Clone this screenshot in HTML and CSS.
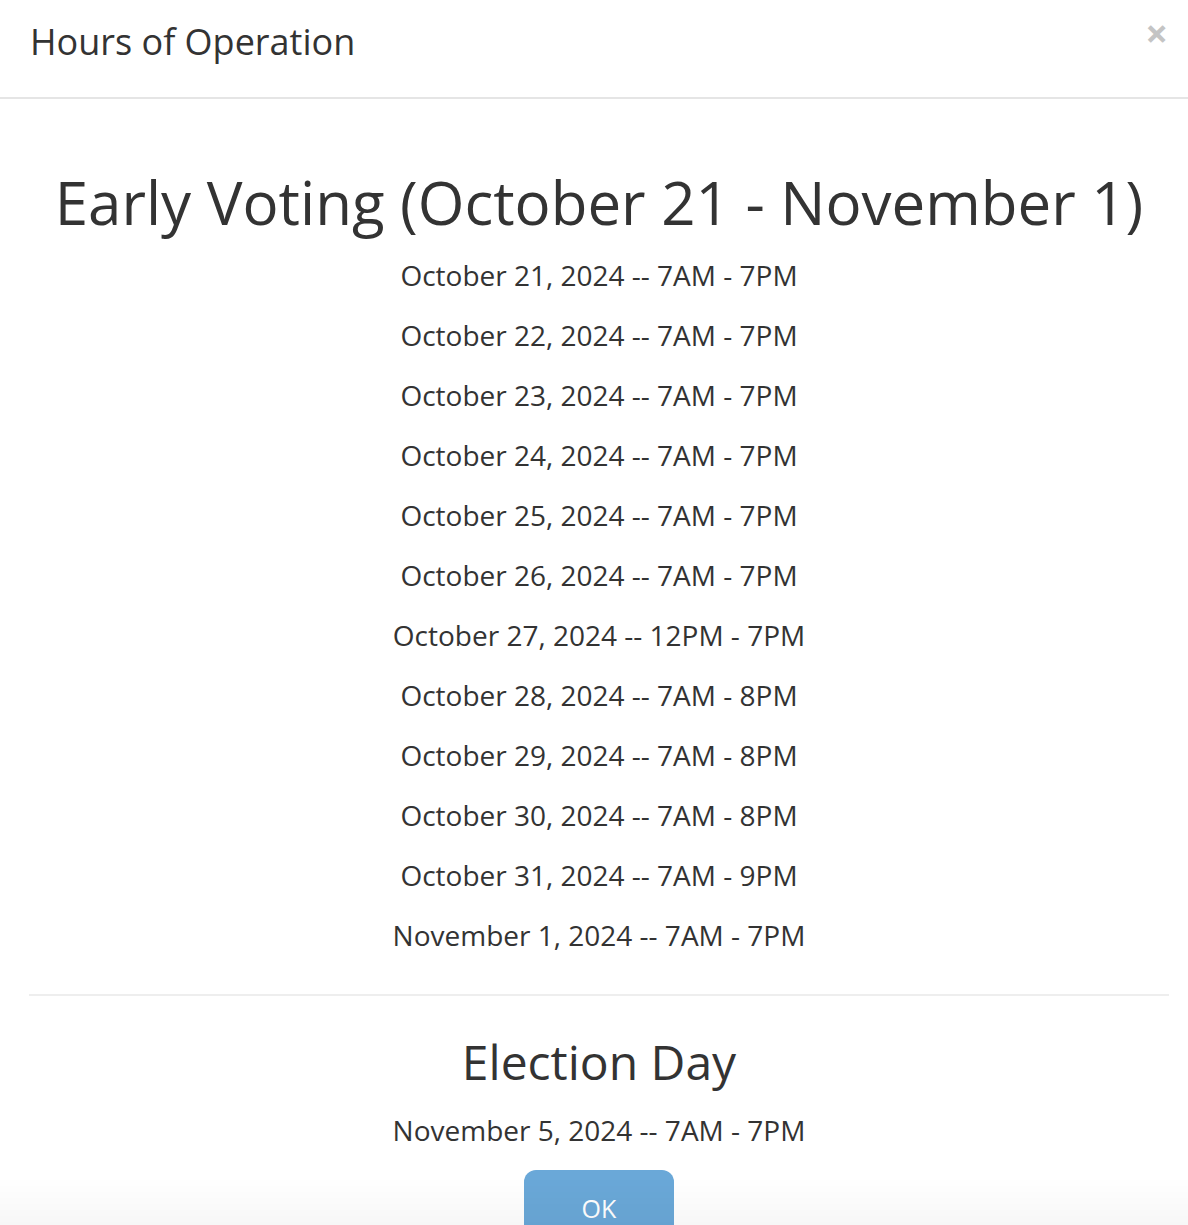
FILE: index.html
```html
<!DOCTYPE html>
<html>
<head>
<meta charset="utf-8">
<link rel="stylesheet" href="styles.css">
</head>
<body>
<div class="modal">
  <div class="modal-header">
    <h4 class="modal-title">Hours of Operation</h4>
    <button class="close" type="button">&times;</button>
  </div>
  <div class="modal-body">
    <h1 class="section-title">Early Voting (October 21 - November 1)</h1>
    <ul class="hours">
      <li>October 21, 2024 -- 7AM - 7PM</li>
      <li>October 22, 2024 -- 7AM - 7PM</li>
      <li>October 23, 2024 -- 7AM - 7PM</li>
      <li>October 24, 2024 -- 7AM - 7PM</li>
      <li>October 25, 2024 -- 7AM - 7PM</li>
      <li>October 26, 2024 -- 7AM - 7PM</li>
      <li>October 27, 2024 -- 12PM - 7PM</li>
      <li>October 28, 2024 -- 7AM - 8PM</li>
      <li>October 29, 2024 -- 7AM - 8PM</li>
      <li>October 30, 2024 -- 7AM - 8PM</li>
      <li>October 31, 2024 -- 7AM - 9PM</li>
      <li>November 1, 2024 -- 7AM - 7PM</li>
    </ul>
    <hr class="divider">
    <h2 class="day-title">Election Day</h2>
    <ul class="hours">
      <li>November 5, 2024 -- 7AM - 7PM</li>
    </ul>
    <div class="actions">
      <button class="btn-ok" type="button">OK</button>
    </div>
  </div>
</div>
<div class="fade-bottom"></div>
</body>
</html>
```

FILE: styles.css
```css
html, body {
  margin: 0;
  padding: 0;
  background: #fff;
}
body {
  font-family: "Open Sans", "Liberation Sans", sans-serif;
  color: #333;
  overflow: hidden;
}
.modal {
  width: 1188px;
}
.modal-header {
  display: flex;
  justify-content: space-between;
  align-items: flex-start;
  height: 99px;
  box-sizing: border-box;
  padding: 0 0 0 30px;
  border-bottom: 2px solid #e5e5e5;
}
.modal-title {
  margin: 0;
  padding-top: 18px;
  font-size: 36px;
  font-weight: 400;
  line-height: 48px;
  color: #333;
}
.close {
  border: 0;
  background: none;
  padding: 0;
  margin: 13px 20px 0 0;
  font-family: "Open Sans", "Liberation Sans", sans-serif;
  font-size: 40px;
  font-weight: 700;
  line-height: 40px;
  color: #c4c4c4;
  cursor: pointer;
}
.modal-body {
  padding: 0 19px 0 29px;
  text-align: center;
}
.section-title {
  margin: 60px 0 0;
  font-size: 60px;
  font-weight: 400;
  line-height: 86px;
  color: #333;
  white-space: nowrap;
}
.hours {
  list-style: none;
  margin: 0;
  padding: 0;
}
.hours li {
  font-size: 28px;
  line-height: 60px;
}
.divider {
  border: 0;
  border-top: 2px solid #eee;
  margin: 29px 0 0;
}
.day-title {
  margin: 28px 0 0;
  font-size: 48px;
  font-weight: 400;
  line-height: 76px;
}
.actions {
  padding-top: 10px;
}
.btn-ok {
  width: 150px;
  height: 76px;
  border: 0;
  border-radius: 12px;
  background: #6aa8d8;
  color: #fff;
  font-family: "Open Sans", "Liberation Sans", sans-serif;
  font-size: 25px;
  padding: 0;
  line-height: 76px;
  vertical-align: top;
}
.fade-bottom {
  position: fixed;
  left: 0;
  right: 0;
  bottom: 0;
  height: 48px;
  background: linear-gradient(to bottom, rgba(0,0,0,0), rgba(0,0,0,0.03));
  pointer-events: none;
}
```
